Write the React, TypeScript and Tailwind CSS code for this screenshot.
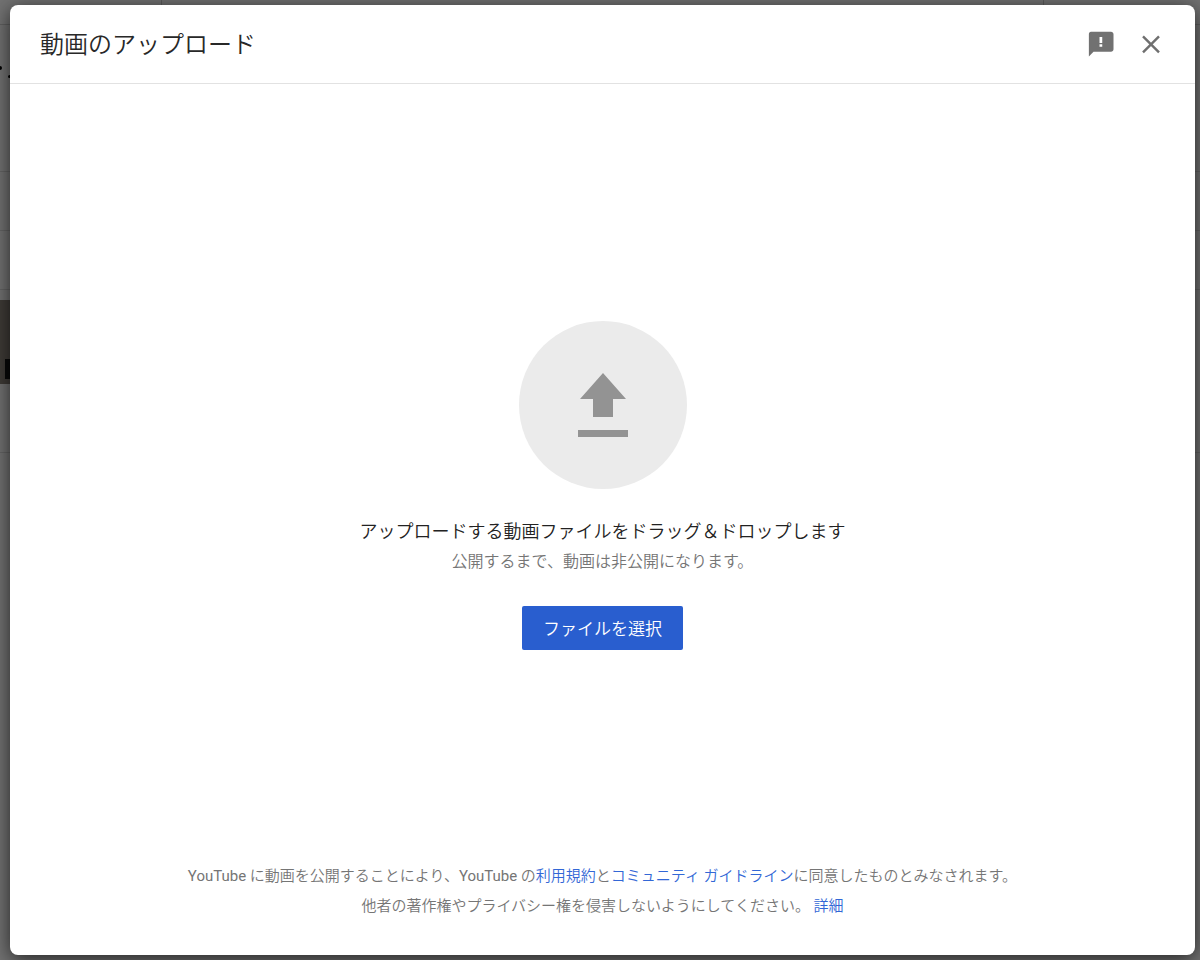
import React from 'react'

const CloseIcon = () => (
  <svg viewBox="0 0 30 30" className="size-[30px]" fill="none" stroke="#6f6f6f" strokeWidth="2.4" aria-hidden="true">
    <path d="M7 7.3 L23 23.3 M23 7.3 L7 23.3" />
  </svg>
)

const FeedbackIcon = () => (
  <svg viewBox="0 0 24 24" className="size-[30px]" fill="#717171" aria-hidden="true">
    <path d="M20 2.2H4c-1.1 0-1.7.9-1.7 2V22l3.7-3.8h14c1.1 0 2-.9 2-2v-12c0-1.1-.9-2-2-2zm-7 12h-2.2v-2H13v2zm0-3h-2.2V6.4H13v4.8z" />
  </svg>
)

const UploadIcon = () => (
  <svg viewBox="0 0 168 168" className="size-[168px]" aria-hidden="true">
    <circle cx="84" cy="84" r="84" fill="#ebebeb" />
    <path d="M84 52 L107 78 H94 V96 H74 V78 H61 Z" fill="#939393" />
    <path d="M59 109 H109 V116 H59 Z" fill="#939393" />
  </svg>
)

// dimmed page that stays visible around the dialog
const PageBehind = () => (
  <div className="absolute inset-0 flex flex-col overflow-hidden bg-[#727272]" aria-hidden="true">
    <div className="flex h-[25px] shrink-0 justify-between border-b border-[#606060] pr-[156px] pl-[161px]">
      <span className="w-px bg-[#5c5c5c]" />
      <span className="w-px bg-[#5c5c5c]" />
    </div>
    <div className="flex h-[147px] shrink-0 gap-[6px] border-b border-[#646464] pt-[41px]">
      <span className="h-[4px] w-[2px] rounded-r-full bg-black" />
      <span className="mt-[9px] size-[3px] rounded-full bg-black" />
    </div>
    <div className="h-[59px] shrink-0 border-b border-[#646464]" />
    <div className="h-[59px] shrink-0 border-b border-[#646464]" />
    <div className="h-[163px] shrink-0 border-b border-[#646464] pt-[10px]">
      <div className="flex h-[84px] w-[150px] items-end bg-[#3f3b37] pb-[5px] pl-[5px]">
        <span className="h-[20px] w-[40px] bg-[#090909]" />
      </div>
    </div>
  </div>
)

const App: React.FC = () => {
  return (
    <div className="relative flex min-h-screen pt-[5px] pr-[5px] pb-[5px] pl-[10px] font-['Noto_Sans_CJK_JP',sans-serif]">
      <PageBehind />
      <div
        role="dialog"
        aria-labelledby="upload-title"
        className="relative flex flex-1 flex-col rounded-lg bg-white shadow-[0_4px_20px_rgba(0,0,0,0.7)]"
      >
        <header className="flex h-[79px] items-center justify-between border-b border-[#e2e2e2] pr-[29px] pl-[30px]">
          <h1 id="upload-title" className="pb-[2px] text-[24px] font-[350] text-[#282828]">動画のアップロード</h1>
          <div className="flex gap-5">
            <button type="button" aria-label="フィードバックを送信"><FeedbackIcon /></button>
            <button type="button" aria-label="閉じる"><CloseIcon /></button>
          </div>
        </header>

        <main className="flex flex-1 flex-col items-center justify-center pt-[26px]">
          <UploadIcon />
          <p className="mt-[27px] text-[18px] leading-7 font-[350] text-[#222222]">
            アップロードする動画ファイルをドラッグ＆ドロップします
          </p>
          <p className="mt-1 text-[16px] leading-6 font-[350] text-[#757575]">公開するまで、動画は非公開になります。</p>
          <button type="button" className="mt-[34px] h-11 rounded-xs bg-[#295ecf] px-[21px] text-[17px] font-[350] text-white">
            ファイルを選択
          </button>
        </main>

        <footer className="px-6 pb-[34px] text-center font-[Roboto,'Noto_Sans_CJK_JP',sans-serif] text-[15px] leading-[30px] font-[350] text-[#757575]">
          <p>
            <span className="font-normal">YouTube</span> に動画を公開することにより、<span className="font-normal">YouTube</span> の
            <a href="#terms" className="text-[#3267d6]">利用規約</a>と
            <a href="#guidelines" className="text-[#3267d6]">コミュニティ ガイドライン</a>
            に同意したものとみなされます。
          </p>
          <p>
            他者の著作権やプライバシー権を侵害しないようにしてください。 <a href="#more" className="text-[#3267d6]">詳細</a>
          </p>
        </footer>
      </div>
    </div>
  )
}

export default App
